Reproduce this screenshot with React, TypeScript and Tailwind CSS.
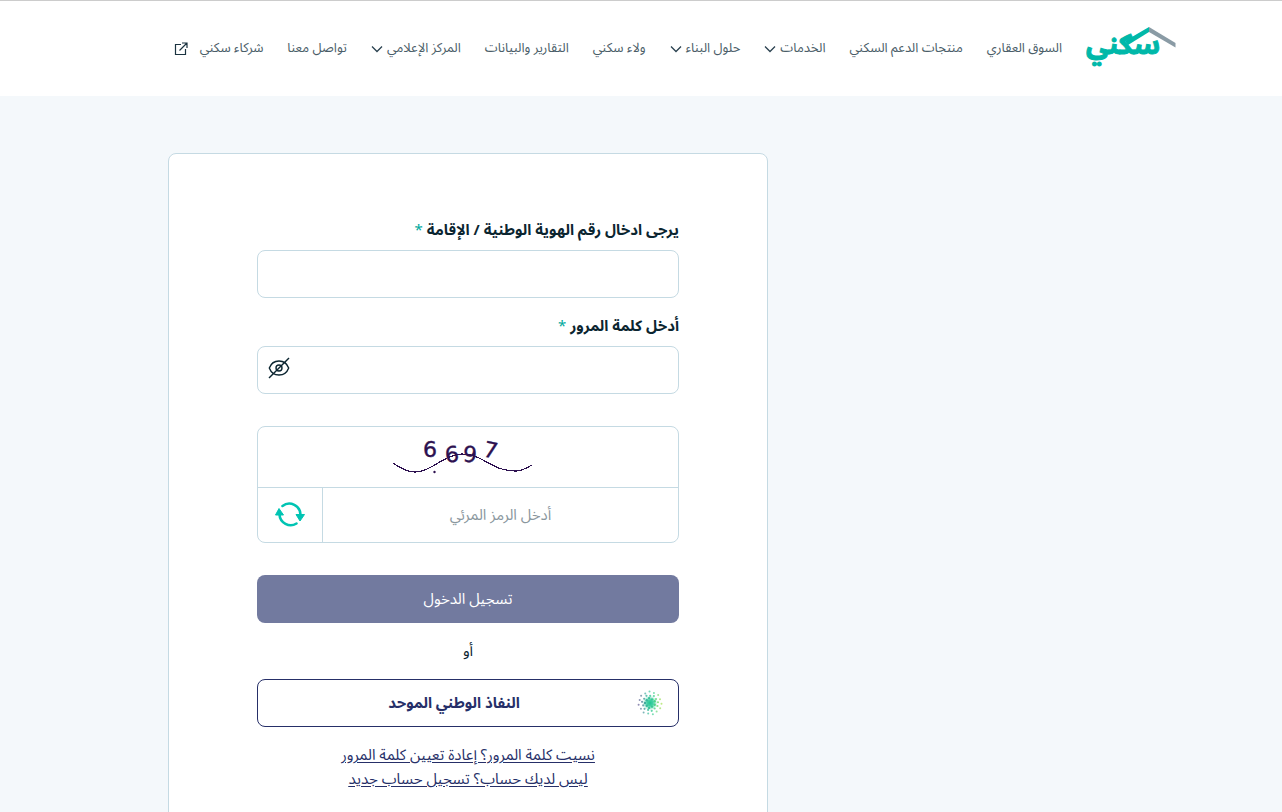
import { useState } from 'react';
import type { ReactNode } from 'react';

// --- Icons ---
const SakaniLogo = () => (
    <svg width="90" height="46" viewBox="0 0 90 46" role="img" aria-label="سكني">
        <text
            x="74"
            y="28"
            direction="rtl"
            textAnchor="start"
            fill="#00b8a9"
            stroke="#00b8a9"
            strokeWidth="1"
            className="font-['Noto_Sans_Arabic','DejaVu_Sans',sans-serif] text-[28px] font-bold"
        >
            سكني
        </text>
        <path d="M63 1v5L42 19l-3-4z" fill="#00b8a9" />
        <path d="M63 1 89.500 17v4.500L63 6z" fill="#8a9ba5" />
    </svg>
);

const ChevronDown = () => (
    <svg width="12" height="8" viewBox="0 0 12 8" fill="none" stroke="#2b4250" strokeWidth="1.3" aria-hidden="true">
        <path d="M1 1.500 6 6.500 11 1.500" />
    </svg>
);

const ExternalIcon = () => (
    <svg width="14" height="14" viewBox="0 0 14 14" fill="none" stroke="#1b3340" strokeWidth="1.2" aria-hidden="true">
        <path d="M7 2.500H1.500v10h10V7M8 1h5v5M13 1 5.500 8.500" />
    </svg>
);

const EyeOffIcon = () => (
    <svg width="24" height="24" viewBox="0 0 24 24" fill="none" stroke="#0b2530" strokeWidth="1.4" aria-hidden="true">
        <path d="M2.300 12C4 7.500 7.500 5 12 5s8 2.500 9.700 7c-1.700 4.500-5.200 7-9.700 7s-8-2.500-9.700-7Z" />
        <circle cx="12" cy="12" r="3" />
        <path d="M2 22 22 2" />
    </svg>
);

const RefreshIcon = () => (
    <svg width="32" height="28" viewBox="0 0 32 28" fill="none" aria-hidden="true">
        <path d="M8.500 5A11.200 11.200 0 0 1 26.500 14" stroke="#00c4b3" strokeWidth="2.600" strokeLinecap="round" />
        <path d="M5.500 13.500A11.200 11.200 0 0 0 22.500 22.500" stroke="#00c4b3" strokeWidth="2.600" strokeLinecap="round" />
        <path d="M22 13.500h8.500L26 20zM1.500 14h8L5 7.500z" fill="#00c4b3" stroke="#00c4b3" strokeLinejoin="round" />
    </svg>
);

// Dotted burst: purple on the left, green in the middle, lime on the right
const rings = [
    { radius: 5, count: 9, size: 1.2, opacity: 0.9 },
    { radius: 8, count: 13, size: 1.1, opacity: 0.75 },
    { radius: 11.5, count: 15, size: 1, opacity: 0.65 },
];

const NafathIcon = () => (
    <svg width="28" height="28" viewBox="0 0 28 28" aria-hidden="true">
        <defs>
            <linearGradient id="burst" gradientUnits="userSpaceOnUse" x1="2" y1="14" x2="26" y2="14">
                <stop offset="0" stopColor="#5b4a8c" />
                <stop offset="0.35" stopColor="#2cb59a" />
                <stop offset="0.65" stopColor="#34cf8c" />
                <stop offset="1" stopColor="#a5e03f" />
            </linearGradient>
            <radialGradient id="core">
                <stop offset="0" stopColor="#1fc592" />
                <stop offset="0.4" stopColor="#2ecb9a" stopOpacity="0.9" />
                <stop offset="1" stopColor="#5ad6ae" stopOpacity="0" />
            </radialGradient>
        </defs>
        <circle cx="14" cy="14" r="7.500" fill="url(#core)" />
        {rings.map(({ radius, count, size, opacity }) => (
            <g key={radius} fill="url(#burst)" opacity={opacity}>
                {Array.from({ length: count }, (_, i) => {
                    const angle = ((i + radius / 10) / count) * Math.PI * 2;
                    // every other dot sits a little further in
                    const r = radius - (i % 2) * 0.8;
                    return <circle key={i} cx={14 + r * Math.cos(angle)} cy={14 + r * Math.sin(angle)} r={size} />;
                })}
            </g>
        ))}
    </svg>
);

const Captcha = () => (
    <svg width="160" height="60" viewBox="0 0 160 60" fill="none" role="img" aria-label="رمز التحقق">
        <path
            d="M5 36c7 5 14 9 22 9 16 0 30-18 47-18 22 0 28 17 54 17 6 0 11-3 16-6"
            stroke="#2d1150"
            strokeWidth="1.200"
            shapeRendering="crispEdges"
        />
        <circle cx="46.500" cy="45" r="1.200" fill="#2d1150" />
        <g
            fill="#2d1150"
            stroke="#2d1150"
            strokeWidth="0.400"
            direction="ltr"
            className="font-['DejaVu_Sans',sans-serif] text-[22px]"
        >
            <text x="35" y="30">6</text>
            <text x="57" y="35" transform="rotate(-6 64 27)">6</text>
            <text x="75" y="35" transform="rotate(4 82 27)">9</text>
            <text x="96" y="31" transform="rotate(12 103 22)">7</text>
        </g>
    </svg>
);

// --- Header ---
type NavItem = { label: string; menu?: boolean; external?: boolean };

const navItems: NavItem[] = [
    { label: 'السوق العقاري' },
    { label: 'منتجات الدعم السكني' },
    { label: 'الخدمات', menu: true },
    { label: 'حلول البناء', menu: true },
    { label: 'ولاء سكني' },
    { label: 'التقارير والبيانات' },
    { label: 'المركز الإعلامي', menu: true },
    { label: 'تواصل معنا' },
    { label: 'شركاء سكني', external: true },
];

const Header = () => (
    <header className="border-t border-[#cccccc] bg-white">
        <div className="mx-auto flex h-[95px] max-w-[1070px] items-center gap-6">
            <a href="#" className="shrink-0">
                <SakaniLogo />
            </a>
            <nav className="flex items-center gap-6 text-[13px] text-[#4a5d68]">
                {navItems.map(({ label, menu, external }) =>
                    menu ? (
                        <button key={label} type="button" className="flex items-center gap-1 whitespace-nowrap">
                            {label}
                            <ChevronDown />
                        </button>
                    ) : (
                        <a key={label} href="#" className="flex items-center gap-3 whitespace-nowrap">
                            {label}
                            {external && <ExternalIcon />}
                        </a>
                    )
                )}
            </nav>
        </div>
    </header>
);

// --- Login form ---
const FieldLabel = ({ htmlFor, children }: { htmlFor: string; children: ReactNode }) => (
    <label htmlFor={htmlFor} className="mb-2 block h-6 text-[15px] leading-6 font-bold whitespace-nowrap">
        {children} <span className="font-normal text-[#00a99d]">*</span>
    </label>
);

const LoginForm = () => {
    const [showPassword, setShowPassword] = useState(false);

    return (
        <form className="w-full max-w-[600px] rounded-lg border border-[#c5dae3] bg-white px-[88px] py-16">
            <FieldLabel htmlFor="national-id">يرجى ادخال رقم الهوية الوطنية / الإقامة</FieldLabel>
            <input id="national-id" type="text" className="mb-4 block h-12 w-full rounded-lg border border-[#c5dae3] px-4" />

            <FieldLabel htmlFor="password">أدخل كلمة المرور</FieldLabel>
            <div className="relative mb-8">
                <input
                    id="password"
                    type={showPassword ? 'text' : 'password'}
                    className="block h-12 w-full rounded-lg border border-[#c5dae3] pr-4 pl-12"
                />
                <button
                    type="button"
                    aria-label="إظهار كلمة المرور"
                    onClick={() => setShowPassword(!showPassword)}
                    className="absolute top-[10px] left-[10px]"
                >
                    <EyeOffIcon />
                </button>
            </div>

            <div className="mb-8 overflow-hidden rounded-lg border border-[#c5dae3]">
                <div className="flex justify-center">
                    <Captcha />
                </div>
                <div className="flex h-[55px] border-t border-[#c5dae3]">
                    <input
                        type="text"
                        aria-label="أدخل الرمز المرئي"
                        placeholder="أدخل الرمز المرئي"
                        className="min-w-0 flex-1 text-center text-[15px] placeholder:text-[#8a979e]"
                    />
                    <button
                        type="button"
                        aria-label="تحديث الرمز"
                        className="flex w-[65px] items-center justify-center border-r border-[#c5dae3]"
                    >
                        <RefreshIcon />
                    </button>
                </div>
            </div>

            <button type="submit" className="block h-12 w-full rounded-lg bg-[#727a9f] text-[15px] text-white">
                تسجيل الدخول
            </button>
            <p className="my-4 text-center text-[15px] leading-6">أو</p>
            <button
                type="button"
                className="grid h-12 w-full grid-cols-[28px_1fr] items-center rounded-lg border border-[#262f68] px-[14px] text-[15px] font-bold text-[#262f68]"
            >
                <NafathIcon />
                <span>النفاذ الوطني الموحد</span>
            </button>

            <div className="mt-4 flex flex-col items-center text-[15px] leading-6 text-[#262f68] underline underline-offset-2">
                <a href="#">نسيت كلمة المرور؟ إعادة تعيين كلمة المرور</a>
                <a href="#">ليس لديك حساب؟ تسجيل حساب جديد</a>
            </div>
        </form>
    );
};

export default function App() {
    return (
        <div
            dir="rtl"
            className="min-h-screen bg-[#f4f8fb] font-['Noto_Sans_Arabic','DejaVu_Sans',sans-serif] text-[#0b2530]"
        >
            <Header />
            <main className="mx-auto flex max-w-[946px] justify-end pt-[57px] pb-16">
                <LoginForm />
            </main>
        </div>
    );
}
